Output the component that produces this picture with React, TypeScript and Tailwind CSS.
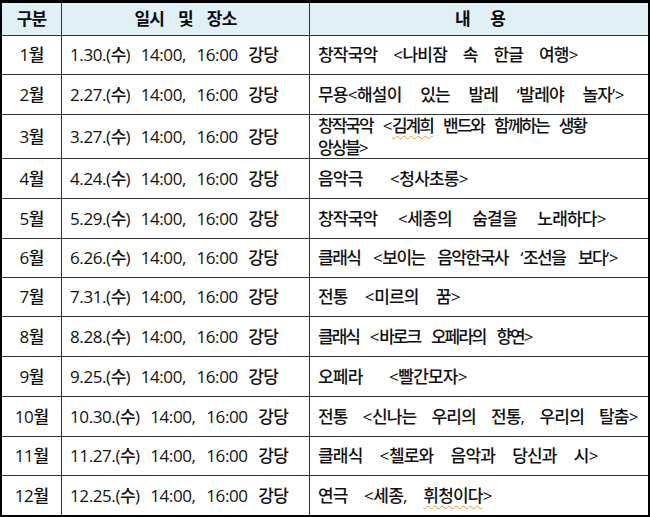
import React from "react";

const sq = "underline decoration-wavy decoration-[#e59a3a] decoration-1 underline-offset-[3px]";

function K({ s, t = "tracking-[-0.8px]" }: { s: string; t?: string }) {
  const parts = s.split(/([가-힣]+)/);
  return (
    <>
      {parts.map((p, i) =>
        /[가-힣]/.test(p) ? (
          <span key={i} className={t}>
            {p}
          </span>
        ) : (
          <React.Fragment key={i}>{p}</React.Fragment>
        )
      )}
    </>
  );
}

const T2 = "tracking-[-2px]";
const T15 = "tracking-[-1.5px]";

type Row = { m: string; d: string; dw: string; c: React.ReactNode; cw: string; h: string; extra?: React.ReactNode };

const rows: Row[] = [
  { m: "1월", d: "1.30.(수) 14:00, 16:00 강당", dw: "w-[208px]", c: <K s="창작국악 <나비잠 속 한글 여행>" />, cw: "w-[260px]", h: "h-[39px]" },
  { m: "2월", d: "2.27.(수) 14:00, 16:00 강당", dw: "w-[208px]", c: <K s="무용<해설이 있는 발레 ‘발레야 놀자’>" />, cw: "w-[306px]", h: "h-[40px]" },
  {
    m: "3월",
    d: "3.27.(수) 14:00, 16:00 강당",
    dw: "w-[208px]",
    c: (
      <>
        <K t={T2} s="창작국악 <" />
        <span className={sq}>
          <K t={T2} s="김계희" />
        </span>
        <K t={T2} s=" 밴드와 함께하는 생황" />
      </>
    ),
    cw: "w-[268px]",
    h: "h-[44px]",
    extra: <K t={T2} s="앙상블>" />,
  },
  { m: "4월", d: "4.24.(수) 14:00, 16:00 강당", dw: "w-[208px]", c: <K s="음악극 <청사초롱>" />, cw: "w-[150px]", h: "h-[40px]" },
  { m: "5월", d: "5.29.(수) 14:00, 16:00 강당", dw: "w-[208px]", c: <K s="창작국악 <세종의 숨결을 노래하다>" />, cw: "w-[288px]", h: "h-[40px]" },
  { m: "6월", d: "6.26.(수) 14:00, 16:00 강당", dw: "w-[208px]", c: <K t={T15} s="클래식 <보이는 음악한국사 ‘조선을 보다’>" />, cw: "w-[300px]", h: "h-[39px]" },
  { m: "7월", d: "7.31.(수) 14:00, 16:00 강당", dw: "w-[208px]", c: <K s="전통  <미르의 꿈>" />, cw: "w-[142px]", h: "h-[39px]" },
  { m: "8월", d: "8.28.(수) 14:00, 16:00 강당", dw: "w-[208px]", c: <K t={T2} s="클래식 <바로크 오페라의 향연>" />, cw: "w-[215px]", h: "h-[40px]" },
  { m: "9월", d: "9.25.(수) 14:00, 16:00 강당", dw: "w-[208px]", c: <K s="오페라 <빨간모자>" />, cw: "w-[149px]", h: "h-[40px]" },
  { m: "10월", d: "10.30.(수) 14:00, 16:00 강당", dw: "w-[218px]", c: <K s="전통  <신나는 우리의 전통, 우리의 탈춤>" />, cw: "w-[320px]", h: "h-[40px]" },
  { m: "11월", d: "11.27.(수) 14:00, 16:00 강당", dw: "w-[218px]", c: <K s="클래식 <첼로와 음악과 당신과 시>" />, cw: "w-[280px]", h: "h-[39px]" },
  {
    m: "12월",
    d: "12.25.(수) 14:00, 16:00 강당",
    dw: "w-[218px]",
    c: (
      <>
        <K s="연극 <세종, " />
        <span className={sq}>
          <K s="휘청이다" />
        </span>
        &gt;
      </>
    ),
    cw: "w-[174px]",
    h: "h-[39px]",
  },
];

const line = "border-[#333333]";
const just = "whitespace-nowrap text-justify [text-align-last:justify]";

export default function App() {
  return (
    <div
      className="w-[650px] h-[517px] bg-white border-t-[3px] border-x-2 border-b-2 border-black flex flex-col text-[17px] font-medium tracking-[-0.4px] text-[#111111]"
      style={{ fontFamily: '"Open Sans", "Noto Sans CJK KR", sans-serif' }}
    >
      <div className={`flex h-[33px] bg-[#e1f0f4] border-b ${line} font-bold text-[#0a0a0a]`}>
        <div className={`w-[60px] border-r ${line} flex items-center justify-center`}>
          <K s="구분" />
        </div>
        <div className={`w-[248px] border-r ${line} flex items-center justify-center`}>
          <span className={`w-[102px] ${just}`}>
            <K s="일시 및 장소" />
          </span>
        </div>
        <div className="flex-1 flex items-center justify-center pl-[2px]">
          <span className={`w-[50px] ${just}`}>
            <K s="내 용" />
          </span>
        </div>
      </div>
      {rows.map((r, i) => (
        <div key={r.m} className={`flex ${r.h} ${i < rows.length - 1 ? `border-b ${line}` : ""}`}>
          <div className={`w-[60px] border-r ${line} flex items-center justify-center`}>
            <K s={r.m} />
          </div>
          <div className={`w-[248px] border-r ${line} flex items-center pl-[8px]`}>
            <span className={`${r.dw} ${just}`}>
              <K s={r.d} />
            </span>
          </div>
          <div className="flex-1 flex flex-col justify-center pl-[8px] leading-[22px]">
            <span className={`${r.cw} ${just}`}>{r.c}</span>
            {r.extra ? <span>{r.extra}</span> : null}
          </div>
        </div>
      ))}
    </div>
  );
}
